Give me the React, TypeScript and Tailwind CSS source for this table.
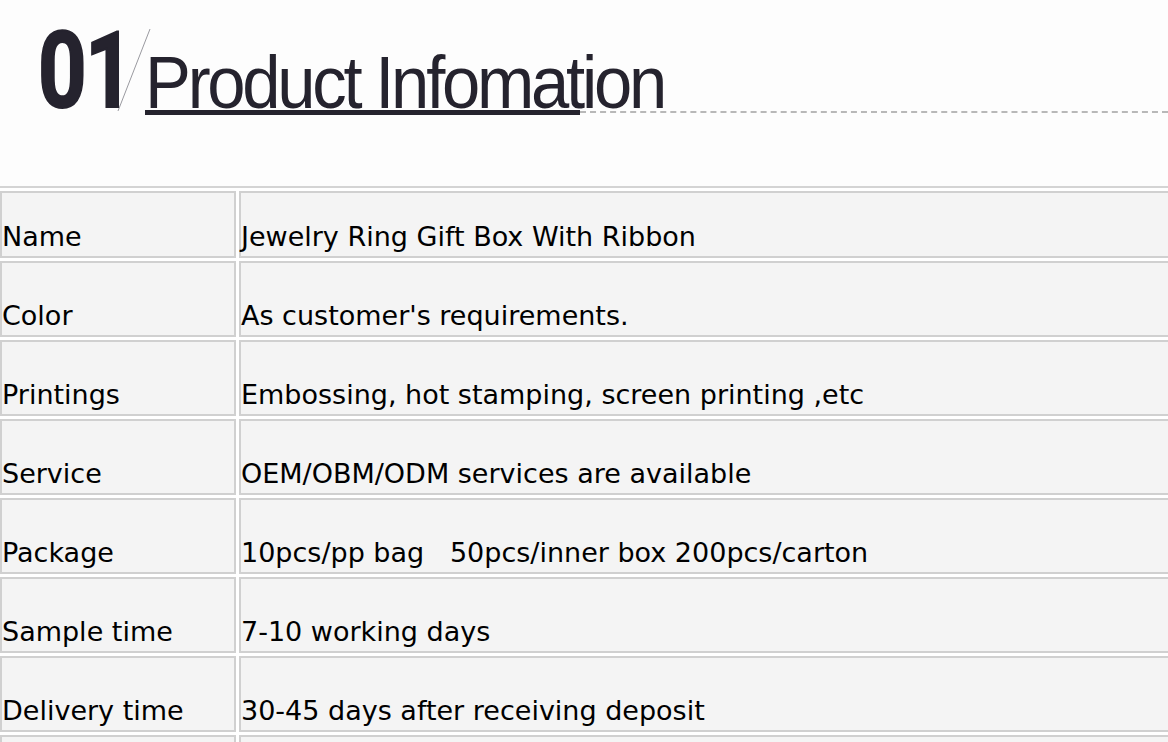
import React from 'react';

const rows = [
  { label: 'Name', value: 'Jewelry Ring Gift Box With Ribbon' },
  { label: 'Color', value: "As customer's requirements." },
  { label: 'Printings', value: 'Embossing, hot stamping, screen printing ,etc' },
  { label: 'Service', value: 'OEM/OBM/ODM services are available' },
  { label: 'Package', value: '10pcs/pp bag\u00a0\u00a0\u00a050pcs/inner box 200pcs/carton' },
  { label: 'Sample time', value: '7-10 working days' },
  { label: 'Delivery time', value: '30-45 days after receiving deposit' },
  { label: '', value: '' },
];

const Heading: React.FC = () => (
  <div className="flex h-[186px] items-start bg-[#fdfdfd] pl-[38px]">
    {/* big number */}
    <div className="mt-[18px] w-[84px] shrink-0 origin-left scale-x-[0.8] font-['Roboto',sans-serif] text-[106px] font-bold leading-none tracking-[-2px] text-[#25232e] [-webkit-text-stroke:2px_#25232e]">
      01
    </div>
    {/* thin slash */}
    <svg className="-ml-[6px] mt-[28px] shrink-0 overflow-visible" width="29" height="84" viewBox="0 0 29 84">
      <line x1="34" y1="1" x2="2" y2="83" stroke="#9a9aa0" strokeWidth="1" />
    </svg>
    <div className="mt-[46px] flex w-[435px] shrink-0 flex-col">
      <div className="h-[64px] origin-left scale-x-[0.93] whitespace-nowrap font-['Liberation_Sans',sans-serif] text-[74px] leading-none tracking-[-3.5px] text-[#25232e]">
        Product Infomation
      </div>
      <div className="h-[5px] bg-[#25232e]" />
    </div>
    <div className="mt-[111px] flex-1 border-t-2 border-dashed border-[#b8b8b8]" />
  </div>
);

export default function App() {
  return (
    <div className="h-[742px] w-[1168px] overflow-hidden bg-white font-['DejaVu_Sans',Verdana,sans-serif] text-black">
      <Heading />
      <div className="ml-[-5px] w-[1178px]">
        <table className="w-full border-separate border-spacing-[3px] border-t-2 border-l-2 border-[#d4d4d4] text-[27px]">
          <tbody>
            {rows.map((r, i) => (
              <tr key={i} className={i === 0 ? 'h-[67px]' : 'h-[76px]'}>
                <td className="w-[236px] border-2 border-[#d0d0d0] bg-[#f4f4f4] pb-[4px] pl-0 align-bottom leading-[30px]">
                  {r.label}
                </td>
                <td className="border-2 border-[#d0d0d0] bg-[#f4f4f4] pb-[4px] pl-0 align-bottom leading-[30px]">
                  {r.value}
                </td>
              </tr>
            ))}
          </tbody>
        </table>
      </div>
    </div>
  );
}
